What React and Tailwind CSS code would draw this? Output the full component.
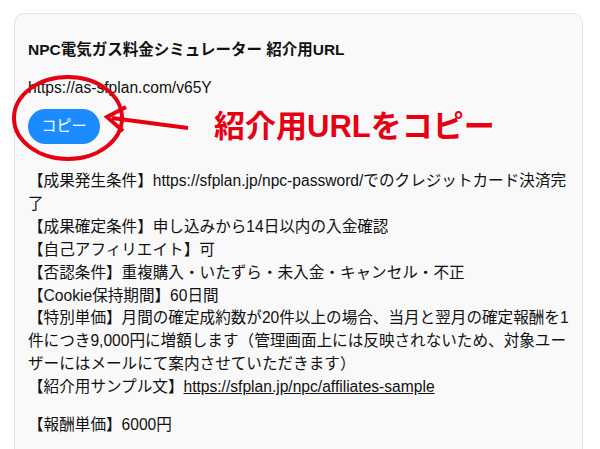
export default function App() {
  const font = { fontFamily: '"Liberation Sans", "Noto Sans CJK JP", sans-serif' };

  return (
    <div className="min-h-[449px] bg-white pt-[13px] pl-[14px] pr-[17px] overflow-hidden" style={font}>
      <div className="relative h-[460px] rounded-[10px] border border-[#e3e3e3] bg-[#f9f9f9] pl-[13px] pr-[13px] pt-[26px] text-[#111]">
        <h2 className="text-[15.5px] font-bold leading-[20px]">NPC電気ガス料金シミュレーター 紹介用URL</h2>

        <p className="mt-[17px] text-[15.6px] leading-[22px]">https://as-sfplan.com/v65Y</p>

        <div className="mt-[10px] flex items-center">
          <button className="h-[35px] w-[72px] rounded-full bg-[#1a8cff] text-[15px] text-white">コピー</button>
          <span className="ml-[114px] text-[31px] font-bold leading-none text-[#e60012]">紹介用URLをコピー</span>
        </div>

        <div className="mt-[26px] text-[15.6px] leading-[22.9px]">
          <p>【成果発生条件】https://sfplan.jp/npc-password/でのクレジットカード決済完了</p>
          <p>【成果確定条件】申し込みから14日以内の入金確認</p>
          <p>【自己アフィリエイト】可</p>
          <p>【否認条件】重複購入・いたずら・未入金・キャンセル・不正</p>
          <p>【Cookie保持期間】60日間</p>
          <p>【特別単価】月間の確定成約数が20件以上の場合、当月と翌月の確定報酬を1件につき9,000円に増額します（管理画面上には反映されないため、対象ユーザーにはメールにて案内させていただきます）</p>
          <p>
            【紹介用サンプル文】<a className="underline">https://sfplan.jp/npc/affiliates-sample</a>
          </p>
          <p className="mt-[15px]">【報酬単価】6000円</p>
        </div>

        <svg className="pointer-events-none absolute left-[-15px] top-[-14px]" width="600" height="200" viewBox="0 0 600 200">
          <ellipse cx="68" cy="118" rx="54" ry="41" fill="none" stroke="#e60012" strokeWidth="4" />
          <line x1="188" y1="128" x2="112" y2="118" stroke="#e60012" strokeWidth="4" />
          <path d="M126 107 L107 117 L123 131" fill="none" stroke="#e60012" strokeWidth="4" strokeLinejoin="miter" />
        </svg>
      </div>
    </div>
  );
}
